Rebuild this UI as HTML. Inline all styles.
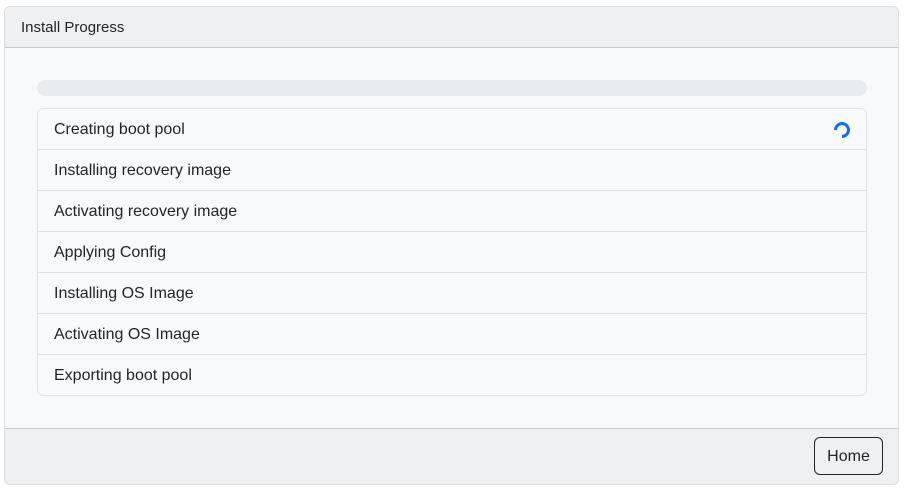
<!DOCTYPE html>
<html><head><style>
*{box-sizing:border-box;margin:0;padding:0}
body{width:906px;height:489px;background:#fff;font-family:"Liberation Sans",sans-serif;color:#212529;position:relative;overflow:hidden}
.card{position:absolute;left:4px;top:6px;width:895px;height:479px;border:1px solid #dcdde0;border-radius:6px;background:#f8f9fa;overflow:hidden}
.hd{height:41px;background:#eff0f2;border-bottom:1px solid #c9cacd;padding-left:16px;line-height:42px;font-size:15px}
.bar{position:absolute;left:32px;top:73px;width:830px;height:16px;background:#e9ecef;border-radius:8px}
.list{position:absolute;left:32px;top:101px;width:830px;height:288px;border:1px solid #dee2e6;border-radius:6px}
.it{height:41px;border-bottom:1px solid #dee2e6;padding-left:16px;line-height:42px;font-size:16px;position:relative}
.it:last-child{border-bottom:none}
.sp{position:absolute;right:16px;top:13px;width:16px;height:16px;border:3px solid #0d6efd;border-left-color:transparent;border-radius:50%;transform:rotate(-45deg)}
.ft{position:absolute;left:0;top:421px;width:100%;height:58px;background:#eff0f2;border-top:1px solid #c9cacd}
.btn{position:absolute;right:15px;top:8px;width:69px;height:38px;border:1px solid #212529;border-radius:6px;font-size:16px;line-height:37px;text-align:center}
</style></head><body>
<div class="card">
<div class="hd">Install Progress</div>
<div class="bar"></div>
<div class="list">
<div class="it">Creating boot pool<span class="sp"></span></div>
<div class="it">Installing recovery image</div>
<div class="it">Activating recovery image</div>
<div class="it">Applying Config</div>
<div class="it">Installing OS Image</div>
<div class="it">Activating OS Image</div>
<div class="it">Exporting boot pool</div>
</div>
<div class="ft"><div class="btn">Home</div></div>
</div>
</body></html>
